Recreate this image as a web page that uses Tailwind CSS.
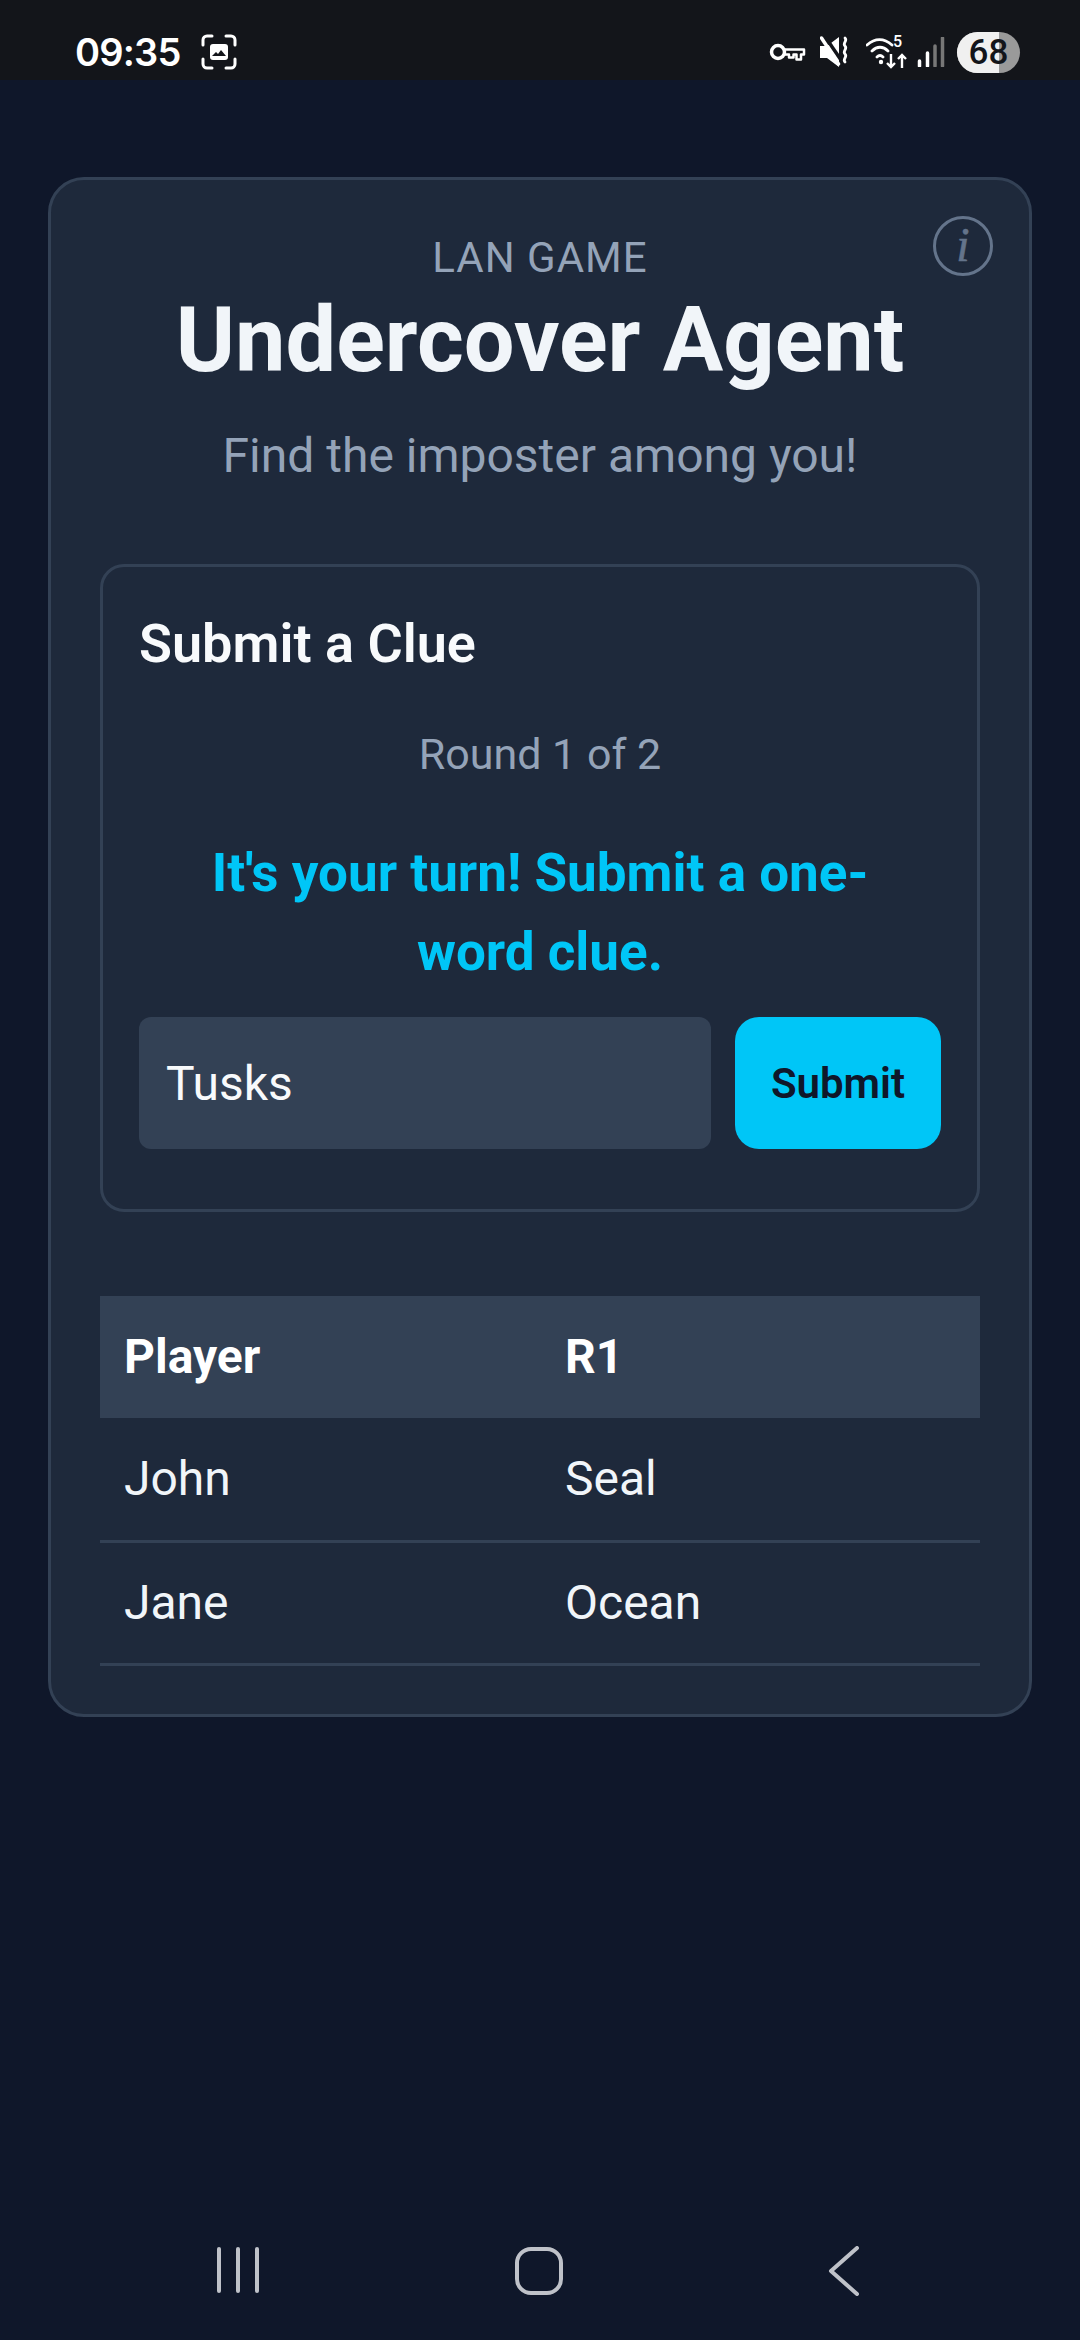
<!DOCTYPE html>
<html lang="en">
<head>
  <meta charset="UTF-8" />
  <meta name="viewport" content="width=device-width, initial-scale=1.0"/>
  <title>Undercover Agent</title>
  <script src="https://cdn.jsdelivr.net/npm/@tailwindcss/browser@4"></script>
</head>
<body class="bg-[#0f172a] text-white font-['Roboto',sans-serif] flex flex-col h-[2340px] w-[1080px] overflow-hidden">

  <!-- status bar -->
  <div class="h-[80px] shrink-0 bg-[#13151a] flex items-center justify-between pl-[75px] pr-[60px] pt-[24px]">
    <div class="flex items-center gap-[20px]">
      <span class="text-[38px] leading-none font-semibold font-['Inter',sans-serif] tracking-[-0.8px]">09:35</span>
      <svg width="36" height="36" viewBox="0 0 36 36" fill="none">
        <path d="M2 11V6a4 4 0 0 1 4-4h5M25 2h5a4 4 0 0 1 4 4v5M34 25v5a4 4 0 0 1-4 4h-5M11 34H6a4 4 0 0 1-4-4v-5" stroke="#fff" stroke-width="3" stroke-linecap="round"/>
        <rect x="9" y="10" width="18" height="16" rx="3" fill="#fff"/>
        <path d="M11 22l4-4 2 2 3-4 5 6z" fill="#13151a"/>
      </svg>
    </div>
    <div class="flex items-center">
      <svg width="37" height="22" viewBox="0 0 37 22" fill="none" class="mr-[14px]">
        <circle cx="9" cy="11" r="6.500" stroke="#fff" stroke-width="3.500"/>
        <path d="M16 8.500h19v5h-3v5h-4.500v-5h-3v3h-4.500v-3H16" stroke="#fff" stroke-width="2.500" stroke-linejoin="round"/>
      </svg>
      <svg width="30" height="32" viewBox="0 0 30 32" fill="none" class="mr-[16px]">
        <path d="M0 10h7l12-9v30L7 22H0z" fill="#fff"/>
        <path d="M4 -1l17 25" stroke="#13151a" stroke-width="3.500"/>
        <path d="M1.500 2l17 26" stroke="#fff" stroke-width="3.500" stroke-linecap="round"/>
        <path d="M25 2c3 3-3 5 0 8s-3 5 0 8-3 5 0 8" stroke="#fff" stroke-width="2.800" stroke-linecap="round"/>
      </svg>
      <div class="relative w-[43px] h-[34px] mr-[8px]">
        <svg width="30" height="30" viewBox="0 0 30 30" fill="none" class="absolute left-0 top-[2px]">
          <path d="M1 8c8-7 17-7 25 0M6 14c5-5 11-5 16 0M11 20c2-2 4-2 6 0" stroke="#fff" stroke-width="2.800" stroke-linecap="round"/>
          <circle cx="15" cy="25" r="2.200" fill="#fff"/>
        </svg>
        <span class="absolute left-[27px] top-[-1px] text-[16px] leading-none font-medium">5</span>
        <svg width="24" height="16" viewBox="0 0 24 16" fill="none" class="absolute left-[20px] top-[18px]">
          <path d="M5 1v13M1 10l4 4 4-4M16 15V3M12 6l4-4 4 4" stroke="#fff" stroke-width="2.400"/>
        </svg>
      </div>
      <svg width="28" height="30" viewBox="0 0 28 30" fill="none" class="mr-[12px]">
        <path d="M2.500 24v5M10.500 16v13" stroke="#fff" stroke-width="3.500" stroke-linecap="round"/>
        <path d="M18 9v20M25.500 1v28" stroke="#777" stroke-width="3.500" stroke-linecap="round"/>
      </svg>
      <div class="w-[63px] h-[41px] rounded-full overflow-hidden relative bg-[#9a9a9a] flex items-center justify-center">
        <div class="absolute left-0 top-0 bottom-0 w-[42px] bg-[#f0f0f0]"></div>
        <span class="relative text-[35px] leading-none font-medium text-[#13151a]">68</span>
      </div>
    </div>
  </div>

  <main class="flex-1 pt-[97px] px-[48px]">
    <div class="relative bg-[#1e293b] border-[3px] border-[#334155] rounded-[36px] pt-[54px] px-[49px] pb-[48px]">
      <svg width="60" height="60" viewBox="0 0 60 60" fill="none" class="absolute right-[36px] top-[36px]">
        <circle cx="30" cy="30" r="28.500" stroke="#64748b" stroke-width="3"/>
        <text x="30" y="45" text-anchor="middle" font-family="Liberation Serif" font-style="italic" font-size="48" fill="#64748b" stroke="#64748b" stroke-width="0.600">i</text>
      </svg>

      <div class="text-center">
        <p class="text-[42px] leading-[48px] text-[#94a3b8] tracking-[1px]">LAN GAME</p>
        <h1 class="text-[90px] leading-[108px] font-bold text-[#f1f5f9] mt-[5px]">Undercover Agent</h1>
        <p class="text-[48px] leading-[56px] text-[#94a3b8] mt-[33px]">Find the imposter among you!</p>
      </div>

      <section class="mt-[80px] border-[3px] border-[#334155] rounded-[24px] px-[36px] pt-[47px] pb-[60px]">
        <h2 class="text-[54px] leading-[60px] font-semibold text-[#f8fafc]">Submit a Clue</h2>
        <p class="text-[43px] leading-[50px] text-[#94a3b8] text-center mt-[55px]">Round 1 of 2</p>
        <p class="text-[53px] leading-[79px] font-bold text-[#00c6f7] text-center mt-[55px] px-[40px]">It's your turn! Submit a one-word clue.</p>
        <div class="flex gap-[24px] mt-[25px]">
          <input value="Tusks" class="flex-1 min-w-0 h-[132px] bg-[#334155] rounded-[12px] px-[27px] text-[48px] text-[#f8fafc] outline-none" />
          <button class="w-[206px] h-[132px] bg-[#00c6f7] rounded-[24px] text-[42px] font-semibold text-[#0f172a]">Submit</button>
        </div>
      </section>

      <table class="w-full mt-[84px] text-[48px] text-left border-collapse table-fixed">
        <thead>
          <tr class="bg-[#334155] h-[122px]">
            <th class="pl-[24px] font-bold w-[441px]">Player</th>
            <th class="pl-[24px] font-bold">R1</th>
          </tr>
        </thead>
        <tbody class="text-[#f1f5f9]">
          <tr class="h-[123px] border-b-[3px] border-[#334155]">
            <td class="pl-[24px]">John</td>
            <td class="pl-[24px]">Seal</td>
          </tr>
          <tr class="h-[123px] border-b-[3px] border-[#334155]">
            <td class="pl-[24px]">Jane</td>
            <td class="pl-[24px]">Ocean</td>
          </tr>
        </tbody>
      </table>
    </div>
  </main>

  <!-- android nav -->
  <div class="h-[174px] shrink-0 flex items-start pt-[81px] relative">
    <div class="w-full flex items-start">
      <div class="ml-[217px] flex gap-[15px]">
        <div class="w-[4px] h-[46px] rounded-full bg-[#bfc2c9]"></div>
        <div class="w-[4px] h-[46px] rounded-full bg-[#bfc2c9]"></div>
        <div class="w-[4px] h-[46px] rounded-full bg-[#bfc2c9]"></div>
      </div>
      <div class="ml-[256px] w-[48px] h-[48px] border-[4px] border-[#bfc2c9] rounded-[16px]"></div>
      <svg width="32" height="50" viewBox="0 0 32 50" fill="none" class="ml-[265px] -mt-[1px]">
        <path d="M29 2L3 25l26 23" stroke="#bfc2c9" stroke-width="4" stroke-linecap="round" stroke-linejoin="round"/>
      </svg>
    </div>
  </div>
</body>
</html>
